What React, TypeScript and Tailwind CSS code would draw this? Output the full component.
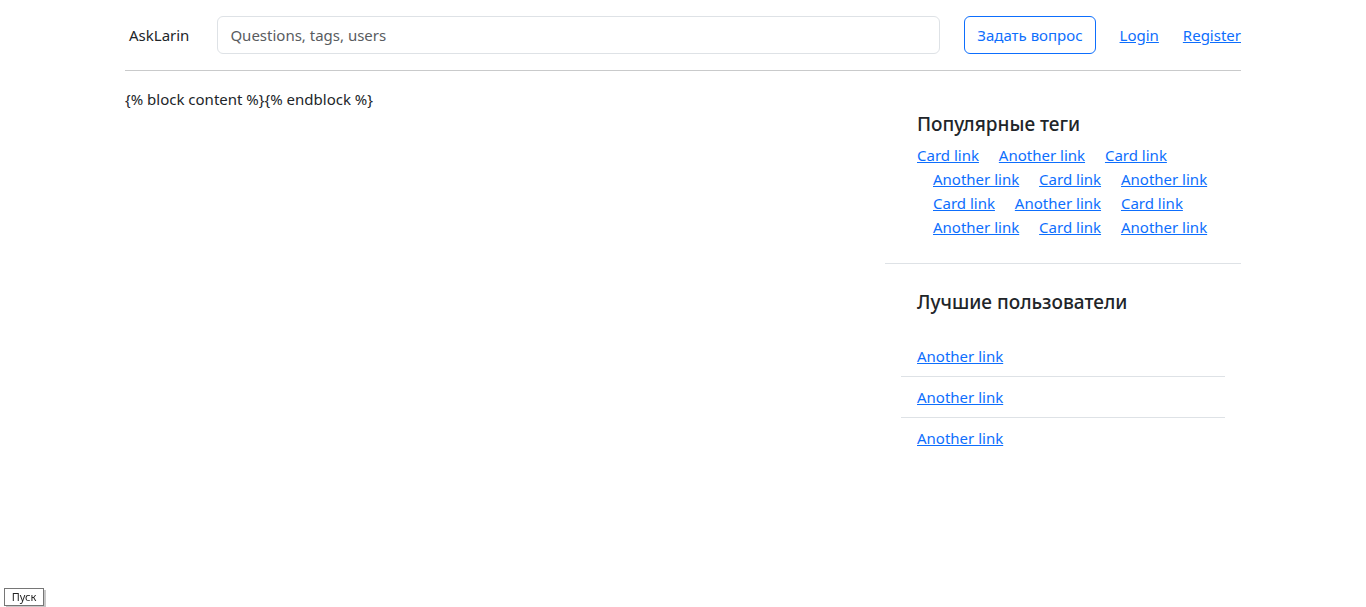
const tags = [
  "Card link",
  "Another link",
  "Card link",
  "Another link",
  "Card link",
  "Another link",
  "Card link",
  "Another link",
  "Card link",
  "Another link",
  "Card link",
  "Another link",
];

const font = { fontFamily: '"Segoe UI", "Noto Sans", "Liberation Sans", sans-serif' };

const App = () => {
  return (
    <div className="min-h-screen bg-white text-[15px] leading-6 text-[#212529]" style={font}>
      <div className="mx-auto w-[1116px]">
        <header className="flex items-center pt-4">
          <a className="pl-1 text-[15px] text-[#212529]">AskLarin</a>
          <input
            className="ml-[28px] h-[38px] flex-1 rounded-md border border-[#dee2e6] px-3 text-[15px] text-[#212529] outline-none placeholder:text-[#595c5f]"
            placeholder="Questions, tags, users"
          />
          <button className="ml-6 h-[38px] rounded-md border border-[#0d6efd] px-3 text-[15px] text-[#0d6efd]">
            Задать вопрос
          </button>
          <a href="#" className="ml-6 text-[#0d6efd] underline">
            Login
          </a>
          <a href="#" className="ml-6 text-[#0d6efd] underline">
            Register
          </a>
        </header>
        <hr className="mt-4 border-t border-[#c9cacb]" />

        <main className="mt-4 flex gap-6">
          <div className="flex-1">
            <p>{"{% block content %}{% endblock %}"}</p>
          </div>

          <aside className="w-[356px] pt-2">
            <section className="px-8 pt-4 pb-4">
              <h5 className="mb-[7px] pt-px text-[19px] leading-6 font-medium">Популярные теги</h5>
              <div className="leading-6">
                {tags.map((t, i) => (
                  <span key={i}>
                    <a
                      href="#"
                      className={`whitespace-nowrap text-[#0d6efd] underline ${i > 0 ? "ml-4" : ""}`}
                    >
                      {t}
                    </a>{" "}
                  </span>
                ))}
              </div>
            </section>

            <section className="mt-2 border-t border-[#dee2e6] px-4 pt-[26px]">
              <h5 className="pl-4 text-[19px] leading-6 font-medium">Лучшие пользователи</h5>
              <ul className="mt-[22px]">
                {[0, 1, 2].map((i) => (
                  <li
                    key={i}
                    className={`px-4 py-2 ${i < 2 ? "border-b border-[#dee2e6]" : ""}`}
                  >
                    <a href="#" className="text-[#0d6efd] underline">
                      Another link
                    </a>
                  </li>
                ))}
              </ul>
            </section>
          </aside>
        </main>
      </div>

      <div className="fixed bottom-[1px] left-1 w-[40px] border border-[#767676] bg-white text-center text-[11px] leading-4 text-[#222] shadow-[2px_2px_0_#c8c8c8]">
        Пуск
      </div>
    </div>
  );
};

export default App;
